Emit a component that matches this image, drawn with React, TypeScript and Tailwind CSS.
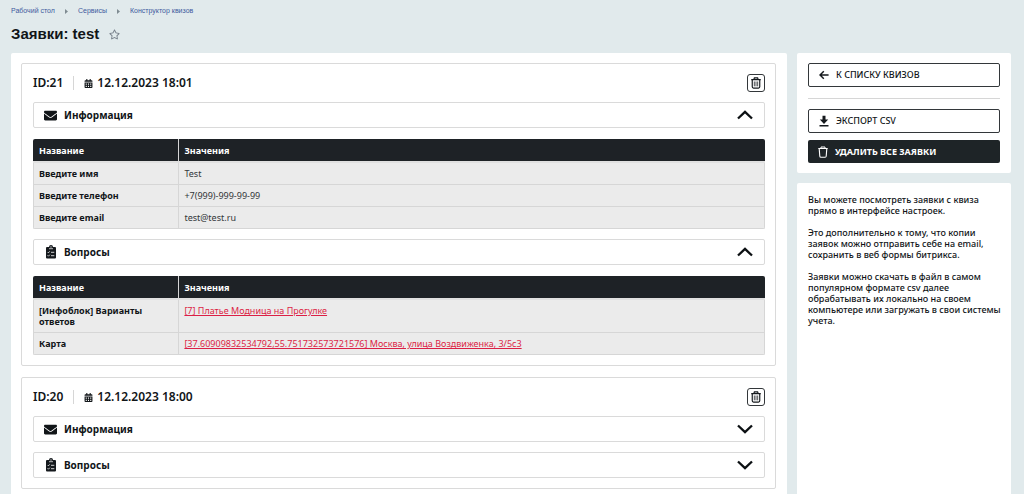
import { useState, type ReactNode } from 'react';
import { FaCalendarAlt, FaEnvelope, FaRegStar } from 'react-icons/fa';

type Row = { name: string; value: string; link?: boolean };
type Application = { id: number; date: string; open: boolean; info: Row[]; questions: Row[] };

const info: Row[] = [
  { name: 'Введите имя', value: 'Test' },
  { name: 'Введите телефон', value: '+7(999)-999-99-99' },
  { name: 'Введите email', value: 'test@test.ru' },
];

const questions: Row[] = [
  { name: '[Инфоблок] Варианты ответов', value: '[7] Платье Модница на Прогулке', link: true },
  {
    name: 'Карта',
    value: '[37.60909832534792,55.751732573721576] Москва, улица Воздвиженка, 3/5с3',
    link: true,
  },
];

const applications: Application[] = [
  { id: 21, date: '12.12.2023 18:01', open: true, info, questions },
  { id: 20, date: '12.12.2023 18:00', open: false, info, questions },
];

const crumbs = ['Рабочий стол', 'Сервисы', 'Конструктор квизов'];

function ClipboardIcon() {
  return (
    <svg viewBox="0 0 12 14" className="h-3.5 w-3" aria-hidden="true">
      <path
        d="M2 2h2a2 1.9 0 0 1 4 0h2a1 1 0 0 1 1 1v9.500a1 1 0 0 1-1 1H2a1 1 0 0 1-1-1V3a1 1 0 0 1 1-1z"
        fill="#15191d"
      />
      <path d="M4 3.700h4" stroke="#fff" strokeWidth="0.700" />
      <circle cx="6" cy="1.900" r="0.600" fill="#fff" />
      <path
        d="M2.600 7l.8.8 1.400-1.500M2.600 10.400l.8.8 1.400-1.500M6 7.300h3.300M6 10.700h3.300"
        fill="none"
        stroke="#fff"
        strokeWidth="0.800"
      />
    </svg>
  );
}

function ChevronIcon({ open }: { open: boolean }) {
  return (
    <svg viewBox="0 0 16 10" className="h-2.5 w-4" aria-hidden="true">
      <path
        d={open ? 'M1 8.500 8 1.800l7 6.700' : 'M1 1.500 8 8.200l7-6.700'}
        fill="none"
        stroke="#0c1013"
        strokeWidth="2.300"
      />
    </svg>
  );
}

function TrashIcon() {
  return (
    <svg viewBox="0 0 12 14" className="h-3 w-2.5" fill="none" stroke="#15191d" aria-hidden="true">
      <path d="M.3 2.900h11.400M3.500 2.700l.6-1.800h3.800l.6 1.800" strokeWidth="1.500" />
      <path d="M1.500 3v8.600q0 1.500 1.500 1.500h6q1.500 0 1.500-1.500V3" strokeWidth="1.400" />
      <path d="M4 5.200v5.800M6 5.200v5.800M8 5.200v5.800" strokeWidth="0.900" />
    </svg>
  );
}

function BinIcon() {
  return (
    <svg viewBox="0 0 10 12" className="h-3 w-2.5" fill="none" stroke="#fff" aria-hidden="true">
      <path d="M.3 2.500h9.400M3 2.300V1h4v1.300" strokeWidth="1" />
      <path d="M1.200 2.600l.6 7.700q.1 1 1.100 1h4.200q1 0 1.100-1l.6-7.700" strokeWidth="1.100" />
    </svg>
  );
}

function ArrowIcon() {
  return (
    <svg viewBox="0 0 10 10" className="size-2.5" fill="none" stroke="#15191d" strokeWidth="1.500" aria-hidden="true">
      <path d="M9.600 5H1.200M4.800 1.300 1 5l3.800 3.700" />
    </svg>
  );
}

function DownloadIcon() {
  return (
    <svg viewBox="0 0 10 12" className="h-3 w-2.5" fill="#15191d" aria-hidden="true">
      <path d="M3.500 .8h3v3.600h2.700L5 8.900.8 4.400h2.700zM.5 10h9v1.400h-9z" />
    </svg>
  );
}

function DataTable({ rows }: { rows: Row[] }) {
  return (
    <table className="mt-[11px] w-full table-fixed border-separate border-spacing-0 overflow-hidden rounded-xs text-left text-[9px] leading-[11px]">
      <thead>
        <tr className="h-6 bg-[#1e2226] text-white">
          <th className="w-1/5 border-r border-b-2 border-r-[#d6d6d6] border-b-[#e0e0e0] px-1.5 font-bold">Название</th>
          <th className="border-b-2 border-[#e0e0e0] px-[5px] font-bold">Значения</th>
        </tr>
      </thead>
      <tbody>
        {rows.map((row) => (
          <tr key={row.name} className="bg-[#ebebeb]">
            <th
              scope="row"
              className="border-r border-b border-l border-[#d6d6d6] py-[5px] pr-6 pl-[5px] align-top font-bold"
            >
              {row.name}
            </th>
            <td className="border-r border-b border-[#d6d6d6] px-[5px] py-[5px] align-top text-[#33373a]">
              {row.link ? (
                <a href="#" className="text-[#dc1f45] underline">
                  {row.value}
                </a>
              ) : (
                row.value
              )}
            </td>
          </tr>
        ))}
      </tbody>
    </table>
  );
}

function Section({ title, icon, initiallyOpen, rows }: { title: string; icon: ReactNode; initiallyOpen: boolean; rows: Row[] }) {
  const [open, setOpen] = useState(initiallyOpen);
  return (
    <section>
      <button
        type="button"
        aria-expanded={open}
        onClick={() => setOpen(!open)}
        className="flex h-[26px] w-full items-center rounded-xs border border-[#dadada] pr-[11px] pl-[9px] text-[10px] font-bold"
      >
        <span className="mr-1.5 flex w-[15px] justify-center">{icon}</span>
        {title}
        <span className="ml-auto">
          <ChevronIcon open={open} />
        </span>
      </button>
      {open && <DataTable rows={rows} />}
    </section>
  );
}

function Card({ item }: { item: Application }) {
  return (
    <article className="flex flex-col gap-2.5 rounded-xs border border-[#dadada] py-2.5 pr-2.5 pl-[11px]">
      <header className="flex h-[18px] items-center text-xs font-semibold">
        <h2>ID:{item.id}</h2>
        <span className="mx-2.5 h-3.5 w-px bg-[#d6d6d6]" />
        <FaCalendarAlt className="mr-1 size-[9px]" aria-hidden="true" />
        <time>{item.date}</time>
        <button
          type="button"
          aria-label="Удалить заявку"
          className="ml-auto flex size-[18px] items-center justify-center rounded-[3px] border border-[#33373a]"
        >
          <TrashIcon />
        </button>
      </header>
      <Section
        title="Информация"
        icon={<FaEnvelope className="size-[13px]" aria-hidden="true" />}
        initiallyOpen={item.open}
        rows={item.info}
      />
      <Section title="Вопросы" icon={<ClipboardIcon />} initiallyOpen={item.open} rows={item.questions} />
    </article>
  );
}

export default function App() {
  return (
    <div className="flex min-h-screen flex-col bg-[#e1eaec] pr-[13px] pl-[11px] font-['Noto_Sans',sans-serif] text-[#111518]">
      <nav className="flex h-[22px] items-center gap-2.5 font-['Liberation_Sans',Arial,sans-serif] text-[7px] text-[#3d5a9e]">
        {crumbs.map((crumb, index) => (
          <span key={crumb} className="flex items-center gap-2.5">
            {index > 0 && (
              <svg viewBox="0 0 3 5" className="h-[5px] w-[3px]" aria-hidden="true">
                <path d="M0 0l3 2.500L0 5z" fill="#7f8b92" />
              </svg>
            )}
            <a href="#">{crumb}</a>
          </span>
        ))}
      </nav>
      <div className="flex h-[31px] items-start gap-2.5 font-['Liberation_Sans',Arial,sans-serif]">
        <h1 className="text-[15px] leading-6 font-bold">Заявки: test</h1>
        <button type="button" aria-label="Добавить в избранное" className="pt-[7px] text-[#767f8a]">
          <FaRegStar className="size-[11px]" />
        </button>
      </div>
      <div className="flex flex-1 gap-2.5">
        <main className="flex min-w-0 flex-1 flex-col gap-[11px] rounded-t-xs bg-white pt-2.5 pr-[11px] pb-1 pl-2.5">
          {applications.map((item) => (
            <Card key={item.id} item={item} />
          ))}
        </main>
        <aside className="flex w-[214px] shrink-0 flex-col gap-2.5 text-[9px]">
          <div className="flex flex-col rounded-xs bg-white px-[11px] py-2.5 font-medium">
            <a href="#" className="flex h-6 items-center gap-[7px] rounded-xs border border-[#33373a] px-2.5">
              <ArrowIcon />К СПИСКУ КВИЗОВ
            </a>
            <hr className="mt-[11px] mb-2.5 border-[#d6d6d6]" />
            <button type="button" className="flex h-6 items-center gap-[7px] rounded-xs border border-[#33373a] px-2.5">
              <DownloadIcon />
              ЭКСПОРТ CSV
            </button>
            <button
              type="button"
              className="mt-[7px] flex h-[23px] items-center gap-[7px] rounded-xs bg-[#1e2427] px-2.5 font-bold text-white"
            >
              <BinIcon />
              УДАЛИТЬ ВСЕ ЗАЯВКИ
            </button>
          </div>
          <div className="flex flex-1 flex-col gap-[11px] rounded-t-xs bg-white py-[11px] pr-2 pl-[11px] leading-[11px] font-medium">
            <p>Вы можете посмотреть заявки с квиза прямо в интерфейсе настроек.</p>
            <p>Это дополнительно к тому, что копии заявок можно отправить себе на email, сохранить в веб формы битрикса.</p>
            <p>
              Заявки можно скачать в файл в самом популярном формате csv далее обрабатывать их локально на своем
              компьютере или загружать в свои системы учета.
            </p>
          </div>
        </aside>
      </div>
    </div>
  );
}
